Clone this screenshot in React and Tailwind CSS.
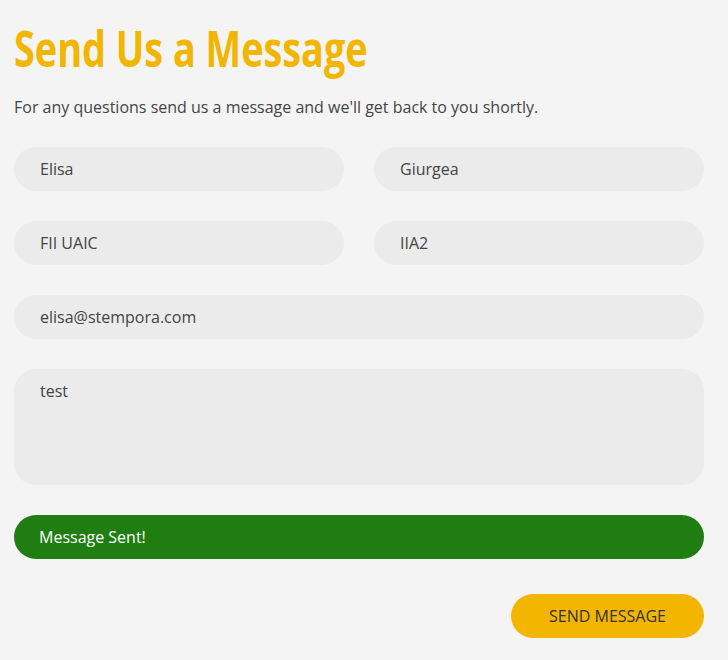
import React, { useState } from "react";

const field =
  "h-[44px] w-full rounded-[22px] bg-[#ebebeb] px-[26px] text-[16px] text-[#444] outline-none";

export default function App() {
  const [form, setForm] = useState({
    first: "Elisa",
    last: "Giurgea",
    school: "FII UAIC",
    group: "IIA2",
    email: "elisa@stempora.com",
    message: "test",
  });

  const update = (key) => (e) => setForm((f) => ({ ...f, [key]: e.target.value }));

  return (
    <div className="min-h-[660px] bg-[#f4f4f4] font-['Open_Sans',sans-serif]">
      <div className="w-[704px] pl-[14px] pt-[18px]">
        <h1 className="origin-left scale-x-[0.756] whitespace-nowrap text-[50px] font-bold leading-[60px] text-[#f2b500]">
          Send Us a Message
        </h1>
        <p className="mt-[17px] text-[16px] leading-[24px] text-[#444]">
          For any questions send us a message and we'll get back to you shortly.
        </p>

        <form className="mt-[28px] flex flex-col gap-[30px]" onSubmit={(e) => e.preventDefault()}>
          <div className="grid grid-cols-2 gap-[30px]">
            <input className={field} value={form.first} onChange={update("first")} />
            <input className={field} value={form.last} onChange={update("last")} />
          </div>
          <div className="grid grid-cols-2 gap-[30px]">
            <input className={field} value={form.school} onChange={update("school")} />
            <input className={field} value={form.group} onChange={update("group")} />
          </div>
          <input className={field} value={form.email} onChange={update("email")} />
          <textarea
            className="h-[116px] w-full resize-none rounded-[22px] bg-[#ebebeb] px-[26px] py-[10px] text-[16px] leading-[24px] text-[#444] outline-none"
            value={form.message}
            onChange={update("message")}
          />
          <div className="flex h-[44px] items-center rounded-[22px] bg-[#1f7d12] px-[25px] text-[16px] text-white">
            Message Sent!
          </div>
          <div className="flex justify-end pt-[5px]">
            <button
              type="submit"
              className="h-[44px] w-[193px] rounded-[22px] bg-[#f2b500] text-[16px] uppercase text-[#333]"
            >
              Send Message
            </button>
          </div>
        </form>
      </div>
    </div>
  );
}
